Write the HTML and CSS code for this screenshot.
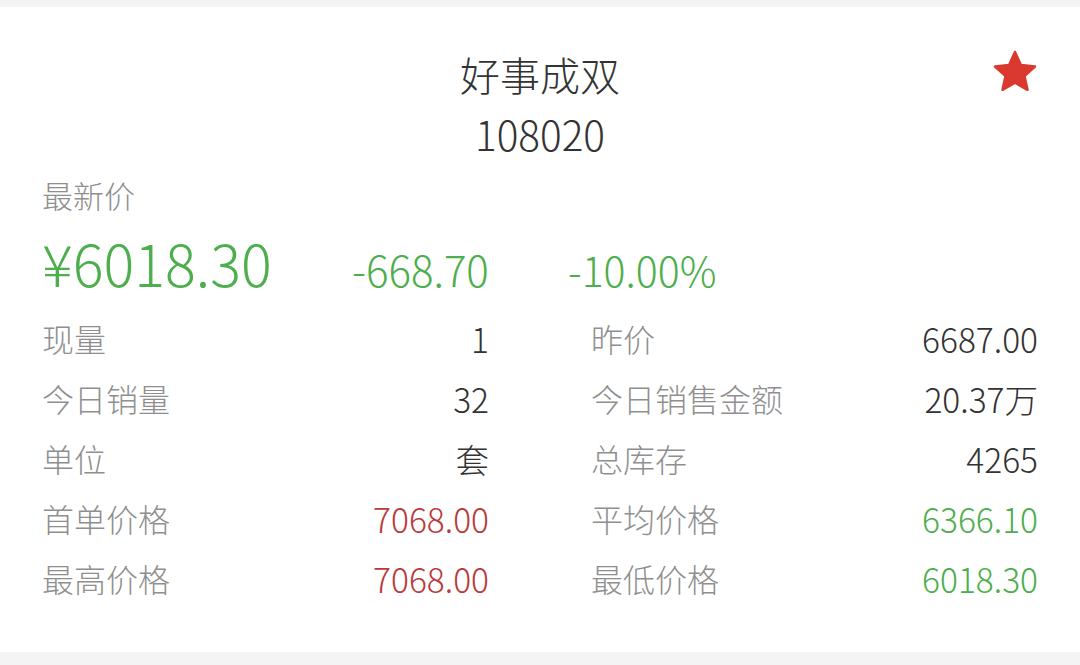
FILE: index.html
```html
<!DOCTYPE html>
<html lang="zh-CN">
<head>
<meta charset="utf-8">
<link rel="stylesheet" href="styles.css">
</head>
<body>
<div class="page">
  <div class="card">
    <svg class="star" viewBox="0 0 24 24" width="50" height="50"><path d="M12 2.4l2.85 6.2 6.75.75-5.05 4.55 1.45 6.65L12 17.15l-6 3.4 1.45-6.65-5.05-4.55 6.75-.75z" fill="#d9392f" stroke="#d9392f" stroke-width="1.2" stroke-linejoin="round"/></svg>
    <div class="title">好事成双</div>
    <div class="code">108020</div>
    <div class="label-latest">最新价</div>
    <div class="price-row">
      <span class="price">¥6018.30</span>
      <span class="change">-668.70</span>
      <span class="pct">-10.00%</span>
    </div>
    <div class="grid">
      <div class="row"><span class="k">现量</span><span class="v">1</span></div>
      <div class="row"><span class="k">昨价</span><span class="v">6687.00</span></div>
      <div class="row"><span class="k">今日销量</span><span class="v">32</span></div>
      <div class="row"><span class="k">今日销售金额</span><span class="v">20.37万</span></div>
      <div class="row"><span class="k">单位</span><span class="v">套</span></div>
      <div class="row"><span class="k">总库存</span><span class="v">4265</span></div>
      <div class="row"><span class="k">首单价格</span><span class="v red">7068.00</span></div>
      <div class="row"><span class="k">平均价格</span><span class="v green">6366.10</span></div>
      <div class="row"><span class="k">最高价格</span><span class="v red">7068.00</span></div>
      <div class="row"><span class="k">最低价格</span><span class="v green">6018.30</span></div>
    </div>
  </div>
</div>
</body>
</html>
```
FILE: styles.css
```css
html, body {
  margin: 0;
  padding: 0;
}
body {
  background: #f4f4f4;
  font-family: "Noto Sans CJK SC", "Noto Sans", sans-serif;
  font-weight: 300;
  width: 1080px;
  height: 665px;
  overflow: hidden;
}
.page {
  padding-top: 7px;
}
.card {
  position: relative;
  background: #fff;
  height: 645px;
  padding: 0 42px;
  box-sizing: border-box;
}
.star {
  position: absolute;
  right: 40px;
  top: 40px;
}
.title {
  padding-top: 42px;
  text-align: center;
  font-size: 40px;
  line-height: 50px;
  color: #333;
}
.code {
  text-align: center;
  font-size: 40.5px;
  line-height: 50px;
  color: #333;
  margin-top: 10px;
}
.label-latest {
  margin-top: 16px;
  font-size: 31px;
  line-height: 40px;
  color: #8f8f8f;
}
.price-row {
  display: flex;
  align-items: baseline;
  height: 70px;
  line-height: 70px;
  margin-top: 12px;
  color: #4cae4c;
}
.price {
  font-size: 57.5px;
  width: 310px;
}
.change {
  font-size: 42px;
  width: 216px;
}
.pct {
  font-size: 41px;
}
.grid {
  display: grid;
  grid-template-columns: 1fr 1fr;
  column-gap: 102px;
  margin-top: 11px;
}
.row {
  display: flex;
  justify-content: space-between;
  align-items: center;
  height: 60px;
  font-size: 32px;
}
.k {
  color: #8f8f8f;
}
.v {
  color: #333;
  font-size: 33.5px;
}
.v.red {
  color: #b83a3a;
}
.v.green {
  color: #4cae4c;
}
```
